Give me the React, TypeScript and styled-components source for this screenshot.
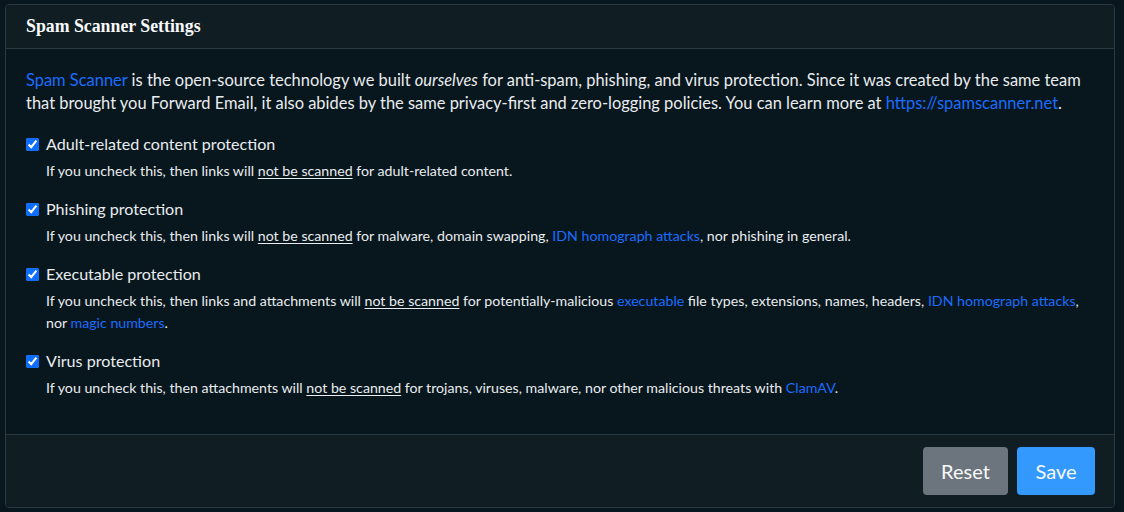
import React from 'react';
import styled, { createGlobalStyle } from 'styled-components';

const GlobalStyle = createGlobalStyle`
  html, body {
    margin: 0;
    padding: 0;
    background: #08161d;
  }
  body {
    font-family: Lato, "Noto Sans", sans-serif;
    color: #e9ecef;
  }
`;

const Page = styled.div`
  padding: 4px 9px 0 5px;
  width: 1124px;
  box-sizing: border-box;
`;

const Card = styled.section`
  border: 1px solid #2a3940;
  border-radius: 4px;
  background: #08161d;
  overflow: hidden;
`;

const CardHeader = styled.header`
  background: #101e24;
  border-bottom: 1px solid #2a3940;
  padding: 10px 20px 11px;
  font-family: "Liberation Serif", "DejaVu Serif", serif;
  font-weight: 700;
  font-size: 17.8px;
  line-height: 22px;
  color: #f8f9fa;
`;

const CardBody = styled.div`
  padding: 20px 20px 35px;
`;

const Intro = styled.p`
  margin: 0 0 18px;
  font-size: 16.45px;
  line-height: 23px;
`;

const Link = styled.a`
  color: #1a6dff;
  text-decoration: none;
`;

const Strong = styled.span`
  text-decoration: underline;
  text-underline-offset: 2px;
`;

const Option = styled.div<{ $last?: boolean }>`
  margin-bottom: ${p => (p.$last ? '0' : '16px')};
`;

const Label = styled.label`
  display: flex;
  align-items: center;
  gap: 7px;
  font-size: 16.1px;
  line-height: 22px;
`;

const Check = styled.input`
  width: 13px;
  height: 13px;
  margin: 0;
  accent-color: #0d6efd;
`;

const Help = styled.div`
  margin: 5px 0 0 20px;
  font-size: 14.2px;
  line-height: 22px;
`;

const CardFooter = styled.footer`
  background: #101e24;
  border-top: 1px solid #2a3940;
  padding: 12px 19px 12px 20px;
  display: flex;
  justify-content: flex-end;
  gap: 9px;
`;

const Button = styled.button<{ $variant: 'secondary' | 'primary' }>`
  height: 48px;
  padding: 0 16px;
  border: none;
  border-radius: 4px;
  font-family: Lato, "Noto Sans", sans-serif;
  font-size: 20px;
  color: #f8f9fa;
  background: ${p => (p.$variant === 'primary' ? '#3399ff' : '#6c757d')};
  min-width: ${p => (p.$variant === 'primary' ? '78px' : '85px')};
`;

const options = [
  {
    title: 'Adult-related content protection',
    help: (
      <>
        If you uncheck this, then links will <Strong>not be scanned</Strong> for adult-related content.
      </>
    ),
  },
  {
    title: 'Phishing protection',
    help: (
      <>
        If you uncheck this, then links will <Strong>not be scanned</Strong> for malware, domain swapping,{' '}
        <Link>IDN homograph attacks</Link>, nor phishing in general.
      </>
    ),
  },
  {
    title: 'Executable protection',
    help: (
      <>
        If you uncheck this, then links and attachments will <Strong>not be scanned</Strong> for
        potentially-malicious <Link>executable</Link> file types, extensions, names, headers,{' '}
        <Link>IDN homograph attacks</Link>, nor <Link>magic numbers</Link>.
      </>
    ),
  },
  {
    title: 'Virus protection',
    help: (
      <>
        If you uncheck this, then attachments will <Strong>not be scanned</Strong> for trojans, viruses,
        malware, nor other malicious threats with <Link>ClamAV</Link>.
      </>
    ),
  },
];

export default function App() {
  return (
    <>
      <GlobalStyle />
      <Page>
        <Card>
          <CardHeader>Spam Scanner Settings</CardHeader>
          <CardBody>
            <Intro>
              <Link>Spam Scanner</Link> is the open-source technology we built <em>ourselves</em> for
              anti-spam, phishing, and virus protection. Since it was created by the same team that
              brought you Forward Email, it also abides by the same privacy-first and zero-logging
              policies. You can learn more at <Link>https://spamscanner.net</Link>.
            </Intro>
            {options.map((o, i) => (
              <Option key={o.title} $last={i === options.length - 1}>
                <Label>
                  <Check type="checkbox" defaultChecked />
                  {o.title}
                </Label>
                <Help>{o.help}</Help>
              </Option>
            ))}
          </CardBody>
          <CardFooter>
            <Button $variant="secondary">Reset</Button>
            <Button $variant="primary">Save</Button>
          </CardFooter>
        </Card>
      </Page>
    </>
  );
}
